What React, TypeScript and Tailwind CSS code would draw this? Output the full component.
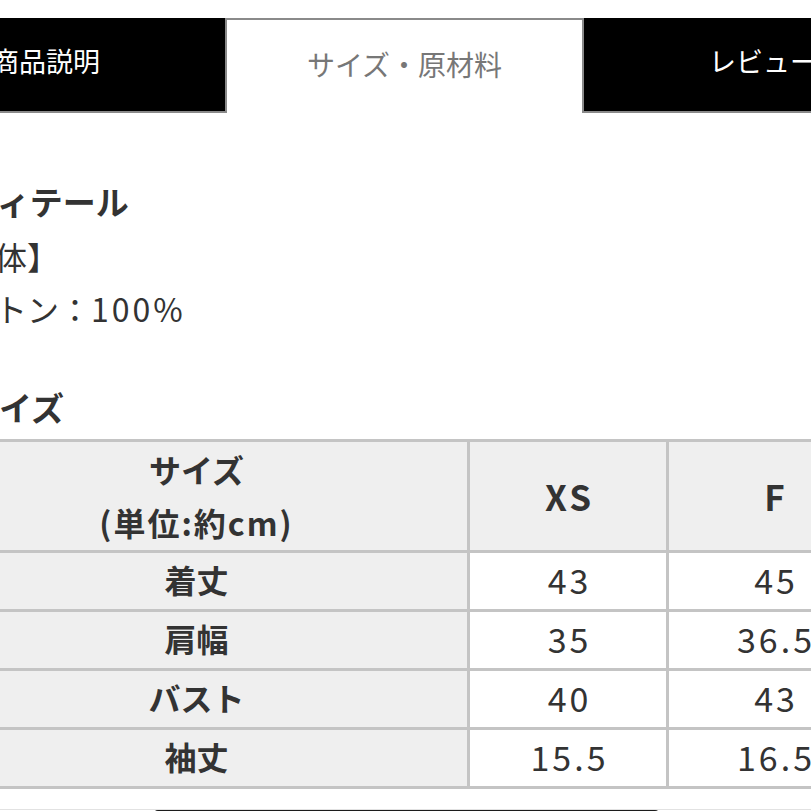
import React from 'react';

const rows = [
  { label: '着丈', xs: '43', f: '45' },
  { label: '肩幅', xs: '35', f: '36.5' },
  { label: 'バスト', xs: '40', f: '43' },
  { label: '袖丈', xs: '15.5', f: '16.5' },
];

const App: React.FC = () => {
  return (
    <div className="h-[811px] w-[811px] overflow-hidden bg-white font-['Noto_Sans_CJK_JP','Noto_Sans',sans-serif] text-[#333]">
      {/* タブ */}
      <div className="-ml-[133px] mt-[18px] flex w-[1076px]">
        <div className="flex h-[95px] w-[358px] items-center justify-center border-b-2 border-[#8a8a8a] bg-black pb-[6px] text-[27px] text-white">
          商品説明
        </div>
        <div className="flex h-[95px] w-[359px] items-center justify-center border-2 border-b-0 border-[#8a8a8a] bg-white pb-[6px] text-[28px] text-[#777]">
          サイズ・原材料
        </div>
        <div className="flex h-[95px] w-[358px] items-center justify-center border-b-2 border-[#8a8a8a] bg-black pb-[6px] text-[27px] text-white">
          レビュー
        </div>
      </div>

      {/* 原材料 */}
      <div className="mt-[66px]">
        <h3 className="-ml-[34px] text-[33px] font-bold leading-[44px]">ディテール</h3>
        <p className="-ml-[69px] mt-[7px] text-[32px] leading-[52px]">【本体】</p>
        <p className="-ml-[69px] text-[32px] leading-[52px]">
          コットン：<span className="tracking-[3px]">100%</span>
        </p>
        <h3 className="-ml-[34px] mt-[51px] text-[33px] font-bold leading-[44px]">サイズ</h3>
      </div>

      {/* サイズ表 */}
      <table className="-ml-[77px] mt-[10px] w-[957px] table-fixed border-collapse text-center">
        <colgroup>
          <col className="w-[544px]" />
          <col className="w-[199px]" />
          <col className="w-[214px]" />
        </colgroup>
        <thead>
          <tr className="h-[111px] bg-[#efefef]">
            <th className="border-[3px] border-[#c4c4c4] text-[32px] font-bold leading-[53px]">
              サイズ
              <br />
              <span className="tracking-[2px]">(単位:約cm)</span>
            </th>
            <th className="border-[3px] border-[#c4c4c4] pl-[3px] text-[35px] font-bold tracking-[3px]">XS</th>
            <th className="border-[3px] border-[#c4c4c4] text-[35px] font-bold">F</th>
          </tr>
        </thead>
        <tbody>
          {rows.map((row) => (
            <tr key={row.label} className="h-[59px]">
              <td className="border-[3px] border-[#c4c4c4] bg-[#efefef] pb-[4px] text-[32px] font-bold">{row.label}</td>
              <td className="border-[3px] border-[#c4c4c4] bg-white pb-[4px] pl-[3px] text-[34px] tracking-[3px]">{row.xs}</td>
              <td className="border-[3px] border-[#c4c4c4] bg-white pb-[4px] pl-[3px] text-[34px] tracking-[3px]">{row.f}</td>
            </tr>
          ))}
        </tbody>
      </table>

      {/* 下部ボタン */}
      <div className="mt-[20px] border-t border-[#e2e2e2]">
        <div className="ml-[154px] h-[50px] w-[505px] rounded-t-[4px] bg-[#1c1c1c]" />
      </div>
    </div>
  );
};

export default App;
